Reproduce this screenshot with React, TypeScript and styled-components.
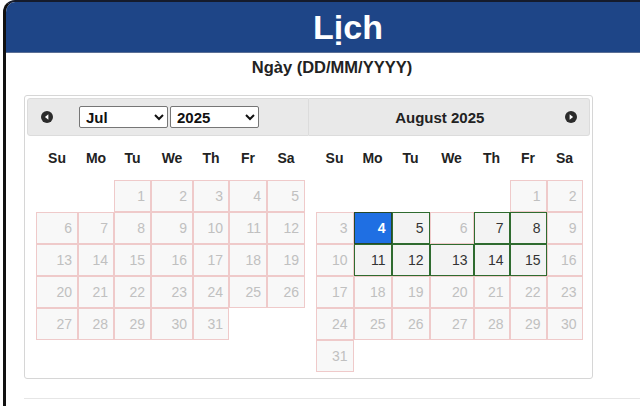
import React from 'react';
import styled, { createGlobalStyle, css } from 'styled-components';

const GlobalStyle = createGlobalStyle`
  html, body {
    margin: 0;
    padding: 0;
    background: #fff;
    overflow: hidden;
    font-family: "Liberation Sans", Arial, sans-serif;
  }
`;

const Window = styled.div`
  margin-left: 3px;
  width: 684px;
  min-height: 406px;
  border-top: 2px solid #151b2c;
  border-left: 3px solid #111;
  border-top-left-radius: 12px;
  overflow: hidden;
  background: #fff;
`;

const TitleBar = styled.div`
  height: 50px;
  background: #1e4587;
  border-bottom: 1px solid #5b6f95;
  display: flex;
  align-items: center;
  justify-content: center;
  color: #fff;
  font-size: 34px;
  font-weight: bold;
`;

const Content = styled.div`
  padding-left: 18px;
  width: 616px;
`;

const Subtitle = styled.div`
  text-align: center;
  font-size: 16.5px;
  font-weight: bold;
  color: #222;
  margin-top: 5px;
  line-height: 18px;
`;

const CalendarBox = styled.div`
  box-sizing: border-box;
  width: 569px;
  margin-top: 19px;
  border: 1px solid #d6d6d6;
  border-radius: 3px;
  padding: 2px 2px 6px;
  display: flex;
`;

const Group = styled.div<{ $inset: number }>`
  flex: 1;
  table {
    margin-left: ${({ $inset }) => $inset}px;
  }
`;

const GroupHeader = styled.div<{ $side: 'left' | 'right' }>`
  height: 38px;
  box-sizing: border-box;
  background: #e9e9e9;
  border: 1px solid #dcdcdc;
  display: flex;
  align-items: center;
  ${({ $side }) =>
    $side === 'left'
      ? css`
          border-radius: 3px 0 0 3px;
          padding-left: 13px;
        `
      : css`
          border-left: none;
          border-radius: 0 3px 3px 0;
          padding-right: 12px;
        `}
`;

const NavButton = styled.span`
  display: inline-flex;
  width: 12px;
  height: 12px;
`;

const Selects = styled.div`
  display: flex;
  gap: 2px;
  margin-left: 26px;
`;

const Select = styled.select`
  width: 89px;
  height: 22px;
  border: 1px solid #767676;
  border-radius: 2px;
  background: #fff;
  color: #111;
  font-family: "Liberation Sans", Arial, sans-serif;
  font-size: 15px;
  font-weight: bold;
  padding: 0 2px;
`;

const MonthTitle = styled.div`
  flex: 1;
  text-align: center;
  font-size: 15px;
  font-weight: bold;
  color: #222;
  padding-left: 6px;
`;

const Table = styled.table`
  border-collapse: separate;
  border-spacing: 0;
  table-layout: fixed;
`;

const DayName = styled.th`
  height: 44px;
  padding: 0;
  font-size: 14px;
  font-weight: bold;
  color: #222;
  text-align: center;
`;

type CellKind = 'empty' | 'off' | 'on' | 'picked';

const Cell = styled.td<{ $kind: CellKind }>`
  height: 30px;
  padding: 0 5px 0 0;
  text-align: right;
  font-size: 14px;
  ${({ $kind }) => {
    switch ($kind) {
      case 'empty':
        return css`
          border: 1px solid transparent;
        `;
      case 'off':
        return css`
          border: 1px solid #efcaca;
          background: #f8f8f8;
          color: #c0c0c0;
        `;
      case 'on':
        return css`
          border: 1px solid #2f6b2f;
          background: #f3f3f3;
          color: #333;
        `;
      case 'picked':
        return css`
          border: 1px solid #26472a;
          background: #1f6fe3;
          color: #fff;
          font-weight: bold;
        `;
    }
  }}
`;

const Divider = styled.div`
  margin-top: 19px;
  height: 1px;
  background: #e6e6e6;
  width: 700px;
`;

const dayNames = ['Su', 'Mo', 'Tu', 'We', 'Th', 'Fr', 'Sa'];

function Arrow({ dir }: { dir: 'prev' | 'next' }) {
  return (
    <NavButton>
      <svg width="12" height="12" viewBox="0 0 12 12">
        <circle cx="6" cy="6" r="6" fill="#2b2b2b" />
        {dir === 'prev' ? (
          <path d="M7.4 3.3 L3.9 6 L7.4 8.7 Z" fill="#fff" />
        ) : (
          <path d="M4.6 3.3 L8.1 6 L4.6 8.7 Z" fill="#fff" />
        )}
      </svg>
    </NavButton>
  );
}

function buildWeeks(firstDay: number, days: number, kindOf: (d: number) => CellKind) {
  const cells: { day: number | null; kind: CellKind }[] = [];
  for (let i = 0; i < firstDay; i++) cells.push({ day: null, kind: 'empty' });
  for (let d = 1; d <= days; d++) cells.push({ day: d, kind: kindOf(d) });
  while (cells.length % 7 !== 0) cells.push({ day: null, kind: 'empty' });
  const weeks = [];
  for (let i = 0; i < cells.length; i += 7) weeks.push(cells.slice(i, i + 7));
  return weeks;
}

function MonthTable({ widths, firstDay, days, kindOf }: {
  widths: number[];
  firstDay: number;
  days: number;
  kindOf: (d: number) => CellKind;
}) {
  const weeks = buildWeeks(firstDay, days, kindOf);
  const total = widths.reduce((a, b) => a + b, 0);
  return (
    <Table style={{ width: total }}>
      <colgroup>
        {widths.map((w, i) => (
          <col key={i} style={{ width: w }} />
        ))}
      </colgroup>
      <thead>
        <tr>
          {dayNames.map((n) => (
            <DayName key={n}>{n}</DayName>
          ))}
        </tr>
      </thead>
      <tbody>
        {weeks.map((week, wi) => (
          <tr key={wi}>
            {week.map((c, ci) => (
              <Cell key={ci} $kind={c.kind}>
                {c.day ?? ''}
              </Cell>
            ))}
          </tr>
        ))}
      </tbody>
    </Table>
  );
}

const available = [5, 7, 8, 11, 12, 13, 14, 15];

export default function App() {
  return (
    <>
      <GlobalStyle />
      <Window>
        <TitleBar>Lịch</TitleBar>
        <Content>
          <Subtitle>Ngày (DD/MM/YYYY)</Subtitle>
          <CalendarBox>
            <Group $inset={9}>
              <GroupHeader $side="left">
                <Arrow dir="prev" />
                <Selects>
                  <Select defaultValue="Jul">
                    <option>Jul</option>
                    <option>Aug</option>
                  </Select>
                  <Select defaultValue="2025">
                    <option>2025</option>
                  </Select>
                </Selects>
              </GroupHeader>
              <MonthTable
                widths={[42, 36, 37, 42, 36, 38, 38]}
                firstDay={2}
                days={31}
                kindOf={() => 'off'}
              />
            </Group>
            <Group $inset={7}>
              <GroupHeader $side="right">
                <MonthTitle>August 2025</MonthTitle>
                <Arrow dir="next" />
              </GroupHeader>
              <MonthTable
                widths={[38, 38, 38, 44, 36, 37, 36]}
                firstDay={5}
                days={31}
                kindOf={(d) => (d === 4 ? 'picked' : available.includes(d) ? 'on' : 'off')}
              />
            </Group>
          </CalendarBox>
          <Divider />
        </Content>
      </Window>
    </>
  );
}
